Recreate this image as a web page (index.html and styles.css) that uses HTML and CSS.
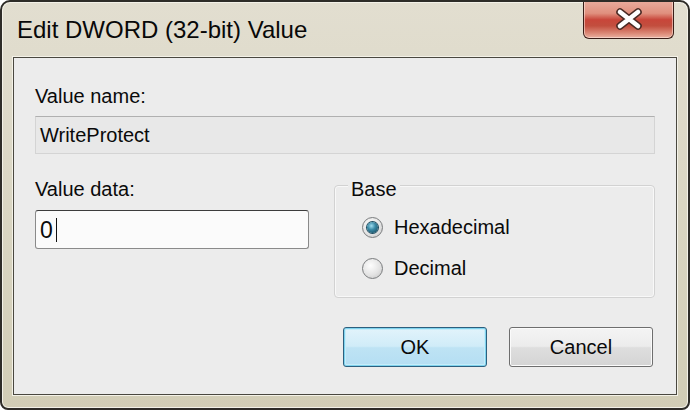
FILE: index.html
```html
<!DOCTYPE html>
<html lang="en">
<head>
<meta charset="utf-8">
<title>Edit DWORD (32-bit) Value</title>
<link rel="stylesheet" href="styles.css">
</head>
<body>
<div class="window">
  <div class="titlebar">
    <span class="title">Edit DWORD (32-bit) Value</span>
    <div class="close" aria-label="Close">
      <svg width="30" height="22" viewBox="-15 -11 30 22">
        <path d="M-9 -7 L9 7 M-9 7 L9 -7" stroke="#4a2a24" stroke-width="7.5" stroke-linecap="round"/>
        <path d="M-9 -7 L9 7 M-9 7 L9 -7" stroke="#ffffff" stroke-width="4.6" stroke-linecap="round"/>
      </svg>
    </div>
  </div>
  <div class="panel">
    <div class="label">Value name:</div>
    <div class="field readonly">WriteProtect</div>
    <div class="row">
      <div class="datacol">
        <div class="label">Value data:</div>
        <div class="field edit"><span class="val">0</span><span class="caret"></span></div>
      </div>
      <div class="group">
        <div class="legend">Base</div>
        <div class="opt first"><span class="radio checked"></span><span>Hexadecimal</span></div>
        <div class="opt second"><span class="radio"></span><span>Decimal</span></div>
      </div>
    </div>
    <div class="buttons">
      <div class="btn ok">OK</div>
      <div class="btn cancel">Cancel</div>
    </div>
  </div>
</div>
</body>
</html>
```
FILE: styles.css
```css
html, body {
  margin: 0;
  padding: 0;
  background: #ffffff;
}
body {
  font-family: "Liberation Sans", Arial, sans-serif;
  color: #0a0a0a;
}
.window {
  box-sizing: border-box;
  width: 690px;
  height: 410px;
  border: 2px solid #2e2c28;
  border-radius: 10px 10px 8px 8px;
  background: linear-gradient(180deg, #e2ded0 0%, #dad6c3 50%, #d2cdb6 100%);
  box-shadow: inset 0 0 0 1px #f3f1e8;
  display: flex;
  flex-direction: column;
  overflow: hidden;
}
.titlebar {
  height: 55px;
  display: flex;
  align-items: flex-start;
  flex-shrink: 0;
}
.title {
  margin-top: 14px;
  margin-left: 15px;
  font-size: 24px;
  line-height: 28px;
  color: #080808;
}
.close {
  margin-left: auto;
  margin-right: 14px;
  margin-top: -2px;
  width: 89px;
  height: 38px;
  border: 1px solid #3a1e18;
  border-top: none;
  border-radius: 0 0 6px 6px;
  background: linear-gradient(180deg, #eaaea0 0%, #e0907e 35%, #c8463a 52%, #c24e3e 68%, #dc8a78 88%, #eab2a2 100%);
  box-shadow: inset 0 0 0 1px rgba(255, 235, 225, 0.55);
  display: flex;
  align-items: center;
  justify-content: center;
}
.panel {
  box-sizing: border-box;
  margin: 0 11px;
  height: 338px;
  flex-shrink: 0;
  border: 1px solid #4a4840;
  background: #ececec;
  box-shadow: 0 0 0 1px #f4f2e8;
  padding: 26px 21px 0 21px;
  display: flex;
  flex-direction: column;
}
.label {
  font-size: 20px;
  line-height: 24px;
}
.field {
  box-sizing: border-box;
  font-size: 20px;
  display: flex;
  align-items: center;
}
.readonly {
  margin-top: 8px;
  height: 38px;
  border: 1px solid #d4d4d4;
  border-top-color: #b0b0b0;
  background: #e8e8e8;
  padding-left: 4px;
}
.row {
  display: flex;
  align-items: flex-start;
  margin-top: 23px;
}
.datacol {
  width: 274px;
  display: flex;
  flex-direction: column;
}
.edit {
  margin-top: 9px;
  height: 39px;
  border: 1px solid #8a8a8a;
  border-top-color: #3c3c3c;
  border-radius: 3px;
  background: #fbfbfb;
  padding-left: 4px;
}
.val {
  font-size: 23px;
  line-height: 24px;
}
.caret {
  display: inline-block;
  width: 0;
  height: 24px;
  border-left: 1.5px solid #111;
  margin-left: 3px;
}
.group {
  box-sizing: border-box;
  margin-left: 25px;
  margin-top: 8px;
  flex: 1;
  height: 113px;
  border: 1px solid #d2d2d2;
  border-radius: 4px;
  box-shadow: inset 0 0 0 1px #f8f8f8;
  display: flex;
  flex-direction: column;
  align-items: flex-start;
  padding-left: 27px;
}
.legend {
  margin-top: -9px;
  margin-left: -14px;
  padding: 0 3px;
  background: #ececec;
  font-size: 20px;
  line-height: 24px;
}
.opt {
  display: flex;
  align-items: center;
  gap: 11px;
  font-size: 20px;
  line-height: 24px;
}
.opt.first {
  margin-top: 14px;
}
.opt.second {
  margin-top: 17px;
}
.radio {
  box-sizing: border-box;
  width: 21px;
  height: 21px;
  border-radius: 50%;
  border: 1px solid #7a7c7e;
  background: radial-gradient(circle at 40% 35%, #fdfdfd 0%, #e4e4e4 55%, #c2c2c2 100%);
  display: flex;
  align-items: center;
  justify-content: center;
}
.radio.checked::after {
  content: "";
  width: 11px;
  height: 11px;
  border-radius: 50%;
  background: radial-gradient(circle at 40% 35%, #9fdcef 0%, #3a8aa6 40%, #0e3d52 100%);
  box-shadow: 0 0 0 1px #1c4a5e;
}
.buttons {
  margin-top: 29px;
  display: flex;
  justify-content: flex-end;
  gap: 22px;
  margin-right: 2px;
}
.btn {
  box-sizing: border-box;
  width: 144px;
  height: 40px;
  border-radius: 3px;
  font-size: 20px;
  display: flex;
  align-items: center;
  justify-content: center;
}
.ok {
  border: 1px solid #2c5f7e;
  background: linear-gradient(180deg, #e2f3fb 0%, #d0ecf8 48%, #bee3f4 52%, #b4def3 100%);
  box-shadow: inset 0 0 0 1px #7fd3ee, inset 0 0 0 2px #c6ecf9;
}
.cancel {
  border: 1px solid #6e6e6e;
  background: linear-gradient(180deg, #f4f4f4 0%, #ececec 48%, #dedede 52%, #d4d4d4 100%);
  box-shadow: inset 0 0 0 1px #fbfbfb;
}
```
